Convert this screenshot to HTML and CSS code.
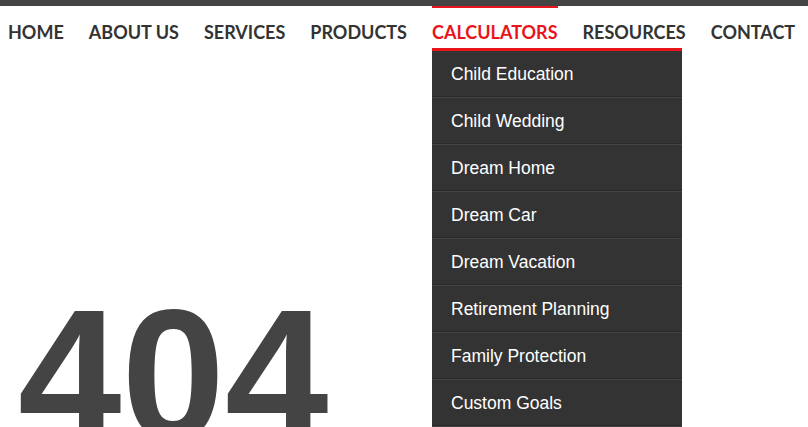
FILE: index.html
```html
<!DOCTYPE html>
<html lang="en">
<head>
<meta charset="utf-8">
<title>404</title>
<link rel="stylesheet" href="styles.css">
</head>
<body>
<header class="site-header">
  <div class="topbar"></div>
  <nav class="main-nav">
    <ul class="menu">
      <li class="menu-item"><a href="#">HOME</a></li>
      <li class="menu-item"><a href="#">ABOUT US</a></li>
      <li class="menu-item"><a href="#">SERVICES</a></li>
      <li class="menu-item"><a href="#">PRODUCTS</a></li>
      <li class="menu-item active"><a href="#">CALCULATORS</a>
        <ul class="submenu">
          <li><a href="#">Child Education</a></li>
          <li><a href="#">Child Wedding</a></li>
          <li><a href="#">Dream Home</a></li>
          <li><a href="#">Dream Car</a></li>
          <li><a href="#">Dream Vacation</a></li>
          <li><a href="#">Retirement Planning</a></li>
          <li><a href="#">Family Protection</a></li>
          <li><a href="#">Custom Goals</a></li>
        </ul>
      </li>
      <li class="menu-item"><a href="#">RESOURCES</a></li>
      <li class="menu-item"><a href="#">CONTACT</a></li>
    </ul>
  </nav>
</header>
<main class="page">
  <h1 class="error-code">404</h1>
</main>
</body>
</html>
```
FILE: styles.css
```css
html, body {
  margin: 0;
  padding: 0;
  background: #fff;
  overflow: hidden;
}

.topbar {
  height: 6px;
  background: #444444;
}

.main-nav {
  position: relative;
  z-index: 10;
}

.menu {
  list-style: none;
  margin: 0;
  padding: 0 0 0 8px;
  display: flex;
  gap: 25px;
}

.menu-item {
  position: relative;
}

.menu-item > a {
  display: block;
  height: 40px;
  box-sizing: border-box;
  border-top: 2px solid transparent;
  padding-top: 14px;
  font-family: "Lato", "Liberation Sans", sans-serif;
  font-weight: 700;
  font-size: 18px;
  line-height: 20px;
  color: #333333;
  text-decoration: none;
  white-space: nowrap;
}

.menu-item.active > a {
  color: #e8141c;
  border-top-color: #e8141c;
}

.submenu {
  position: absolute;
  top: 42px;
  left: 0;
  width: 250px;
  margin: 0;
  padding: 0;
  list-style: none;
  background: #333333;
  border-top: 3px solid #e8141c;
}

.submenu li {
  border-bottom: 1px solid #444444;
  box-shadow: inset 0 -1px 0 #2a2a2a;
}

.submenu a {
  display: block;
  height: 46px;
  padding: 0 0 0 19px;
  font-family: "Liberation Sans", Arial, sans-serif;
  font-size: 17.5px;
  line-height: 46px;
  color: #ffffff;
  text-decoration: none;
}

.page {
  padding-left: 18px;
}

.error-code {
  margin: 236px 0 0 0;
  font-family: "Liberation Sans", Arial, sans-serif;
  font-weight: 700;
  font-size: 186px;
  line-height: 1;
  color: #444444;
}
```
